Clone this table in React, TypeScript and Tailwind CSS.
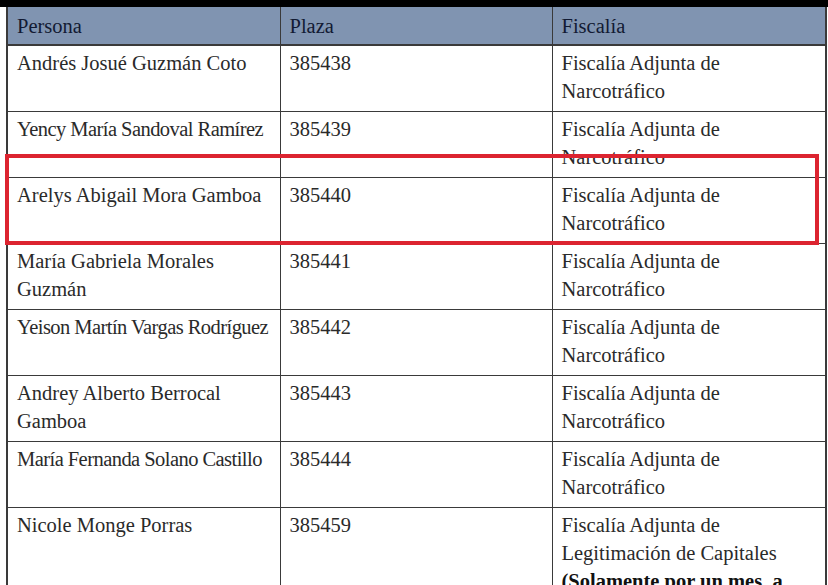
import React from 'react';

const rows = [
  { persona: 'Andrés Josué Guzmán Coto', plaza: '385438', fiscalia: 'Fiscalía Adjunta de Narcotráfico', tight: false },
  { persona: 'Yency María Sandoval Ramírez', plaza: '385439', fiscalia: 'Fiscalía Adjunta de Narcotráfico', tight: true },
  { persona: 'Arelys Abigail Mora Gamboa', plaza: '385440', fiscalia: 'Fiscalía Adjunta de Narcotráfico', tight: false },
  { persona: 'María Gabriela Morales Guzmán', plaza: '385441', fiscalia: 'Fiscalía Adjunta de Narcotráfico', tight: false },
  { persona: 'Yeison Martín Vargas Rodríguez', plaza: '385442', fiscalia: 'Fiscalía Adjunta de Narcotráfico', tight: true },
  { persona: 'Andrey Alberto Berrocal Gamboa', plaza: '385443', fiscalia: 'Fiscalía Adjunta de Narcotráfico', tight: false },
  { persona: 'María Fernanda Solano Castillo', plaza: '385444', fiscalia: 'Fiscalía Adjunta de Narcotráfico', tight: true },
];

const App: React.FC = () => {
  return (
    <div className="relative w-[828px] h-[585px] overflow-hidden bg-white font-['Liberation_Serif',serif] text-[20.5px] leading-[28px] text-[#2a2a2a]">
      <div className="h-[7px] bg-black" />

      <table className="ml-[6px] w-[819px] table-fixed border-collapse border-2 border-t-0 border-[#3a3a3a]">
        <colgroup>
          <col className="w-[273px]" />
          <col className="w-[272px]" />
          <col className="w-[274px]" />
        </colgroup>
        <thead>
          <tr className="h-[38px] bg-[#8094b1] text-[#121a33] border-b-2 border-[#3a3a3a]">
            <th className="border-r border-[#3a3a3a] px-[9px] text-left font-normal">Persona</th>
            <th className="border-r border-[#3a3a3a] px-[9px] text-left font-normal">Plaza</th>
            <th className="px-[9px] text-left font-normal">Fiscalía</th>
          </tr>
        </thead>
        <tbody>
          {rows.map((r, i) => (
            <tr key={i} className="h-[66px] border-b border-[#3a3a3a] align-top">
              <td
                className={
                  r.tight
                    ? 'border-r border-[#3a3a3a] px-[9px] pt-[3px] whitespace-nowrap tracking-[-0.55px]'
                    : 'border-r border-[#3a3a3a] px-[9px] pt-[3px]'
                }
              >
                {r.persona}
              </td>
              <td className="border-r border-[#3a3a3a] px-[9px] pt-[3px]">{r.plaza}</td>
              <td className="px-[9px] pt-[3px]">{r.fiscalia}</td>
            </tr>
          ))}
          <tr className="align-top">
            <td className="border-r border-[#3a3a3a] px-[9px] pt-[3px]">Nicole Monge Porras</td>
            <td className="border-r border-[#3a3a3a] px-[9px] pt-[3px]">385459</td>
            <td className="px-[9px] pt-[3px]">
              Fiscalía Adjunta de Legitimación de Capitales <strong className="font-bold text-[#111]">(Solamente por un mes, a partir del 1 de julio)</strong>
            </td>
          </tr>
        </tbody>
      </table>

      {/* highlight box */}
      <div className="absolute left-[5px] top-[154px] w-[814px] h-[91px] border-[4px] border-[#dc2430] pointer-events-none" />
    </div>
  );
};

export default App;
